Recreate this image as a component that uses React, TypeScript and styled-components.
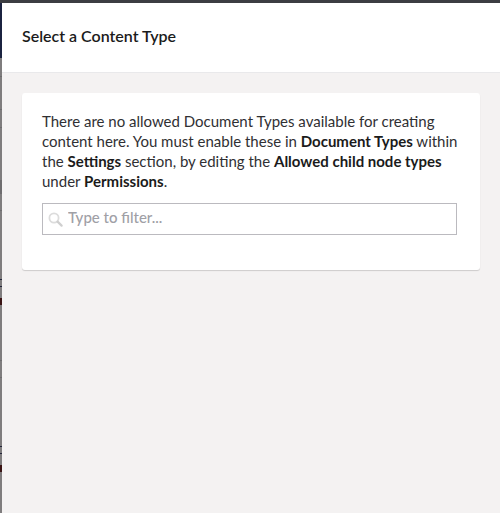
import React from "react";
import styled, { createGlobalStyle } from "styled-components";

const Global = createGlobalStyle`
  html, body { margin: 0; padding: 0; height: 100%; background: #f3f1f1; }
  #root { height: 100%; }
  * { box-sizing: border-box; }
`;

const Page = styled.div`
  display: flex;
  flex-direction: column;
  width: 500px;
  height: 513px;
  overflow: hidden;
  font-family: Lato, "Open Sans", sans-serif;
  color: #1b1b1b;
`;

const TopEdge = styled.div`
  flex: 0 0 3px;
  background: #3c3d42;
`;

const Body = styled.div`
  flex: 1;
  display: flex;
  min-height: 0;
`;

const Backdrop = styled.div`
  flex: 0 0 2px;
  background:
    linear-gradient(
      to bottom,
      #1b2340 0, #1b2340 55px,
      #7f7d7e 55px, #7f7d7e 73px,
      #6e6d6f 73px, #6e6d6f 74px,
      #7f7d7e 74px, #7f7d7e 106px,
      #6e6d6f 106px, #6e6d6f 107px,
      #7f7d7e 107px, #7f7d7e 124px,
      #6e6d6f 124px, #6e6d6f 125px,
      #7f7d7e 125px, #7f7d7e 177px,
      #6e6d6f 177px, #6e6d6f 191px,
      #7f7d7e 191px, #7f7d7e 207px,
      #6e6d6f 207px, #6e6d6f 208px,
      #7f7d7e 208px, #7f7d7e 276px,
      #23253a 276px, #23253a 277px,
      #7f7d7e 277px, #7f7d7e 283px,
      #23253a 283px, #23253a 284px,
      #7f7d7e 284px, #7f7d7e 295px,
      #3a1414 295px, #3a1414 302px,
      #7f7d7e 302px, #7f7d7e 357px,
      #6e6d6f 357px, #6e6d6f 358px,
      #7f7d7e 358px, #7f7d7e 374px,
      #6e6d6f 374px, #6e6d6f 375px,
      #7f7d7e 375px, #7f7d7e 443px,
      #23253a 443px, #23253a 444px,
      #7f7d7e 444px, #7f7d7e 450px,
      #23253a 450px, #23253a 451px,
      #7f7d7e 451px, #7f7d7e 462px,
      #3a1414 462px, #3a1414 469px,
      #7f7d7e 469px, #7f7d7e 100%
    );
`;

const Panel = styled.div`
  flex: 1;
  display: flex;
  flex-direction: column;
  background: #f4f2f2;
`;

const Header = styled.header`
  flex: 0 0 70px;
  display: flex;
  align-items: center;
  padding: 0 20px 4px;
  background: #fff;
  border-bottom: 1px solid #e9e9eb;
`;

const Title = styled.h1`
  margin: 0;
  font-size: 16px;
  font-weight: 600;
  line-height: 20px;
  color: #1b1b1b;
`;

const Content = styled.main`
  padding: 20px;
`;

const Card = styled.section`
  display: flex;
  flex-direction: column;
  align-items: flex-start;
  gap: 12px;
  height: 177px;
  padding: 18px 20px;
  background: #fff;
  border-radius: 3px;
  box-shadow: 0 1px 1px rgba(0, 0, 0, 0.16);
`;

const Message = styled.p`
  margin: 0;
  font-size: 15px;
  line-height: 20px;
  color: #303033;
  strong { font-weight: 700; color: #1b1b1b; }
`;

const Filter = styled.label`
  display: flex;
  align-items: center;
  gap: 5px;
  width: 415px;
  height: 32px;
  padding: 0 5px;
  border: 1px solid #bbbabf;
  background: #fff;
`;

const FilterInput = styled.input`
  flex: 1;
  min-width: 0;
  border: 0;
  outline: 0;
  padding: 0 0 5px;
  background: transparent;
  font: 500 15px Lato, sans-serif;
  color: #1b1b1b;
  &::placeholder { color: #a0a0a6; opacity: 1; }
`;

const SearchIcon = () => (
  <svg width="15" height="15" viewBox="0 0 15 15" fill="none" aria-hidden="true">
    <circle cx="6" cy="6" r="4.6" stroke="#dcdcdc" strokeWidth="1.8" />
    <path d="M9.6 9.6 13.6 13.6" stroke="#cfcfcf" strokeWidth="2.2" strokeLinecap="round" />
  </svg>
);

export default function App() {
  return (
    <Page>
      <Global />
      <TopEdge />
      <Body>
        <Backdrop />
        <Panel>
          <Header>
            <Title>Select a Content Type</Title>
          </Header>
          <Content>
            <Card>
              <Message>
                There are no allowed Document Types available for creating content here. You must enable these in{" "}
                <strong>Document Types</strong> within the <strong>Settings</strong> section, by editing the{" "}
                <strong>Allowed child node types</strong> under <strong>Permissions</strong>.
              </Message>
              <Filter>
                <SearchIcon />
                <FilterInput placeholder="Type to filter..." />
              </Filter>
            </Card>
          </Content>
        </Panel>
      </Body>
    </Page>
  );
}
